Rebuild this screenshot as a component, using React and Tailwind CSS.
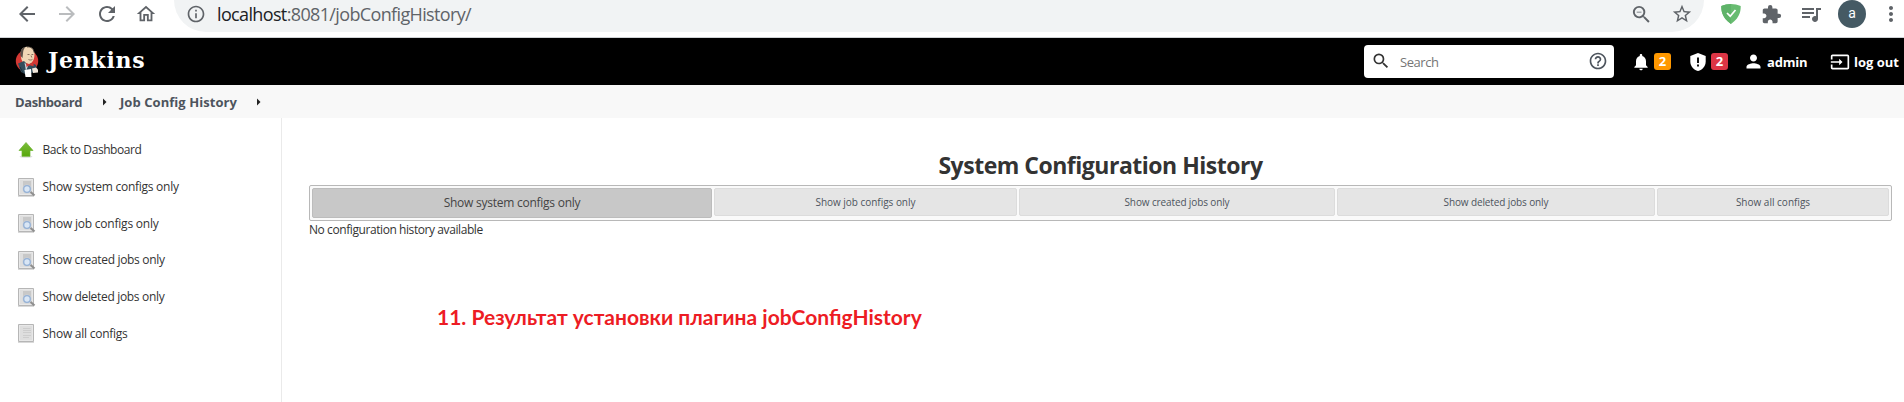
import {
  MdArrowBack,
  MdArrowForward,
  MdRefresh,
  MdOutlineHome,
  MdInfoOutline,
  MdZoomOut,
  MdStarBorder,
  MdExtension,
  MdQueueMusic,
  MdMoreVert,
  MdSearch,
  MdHelpOutline,
  MdNotifications,
  MdPerson,
  MdInput,
} from "react-icons/md";

function JenkinsLogo() {
  return (
    <svg viewBox="0 0 24 32" className="h-8 w-6 shrink-0">
      <ellipse cx="12" cy="15" rx="11.2" ry="11" fill="#d33833" />
      <path d="M6 8C5 3 9 .6 13 .8c5 .2 7 4 6.400 9-.2 4-2 7.400-5.400 8.200L9 17.500C6.500 15 5.600 12 6 8z" fill="#efd6b5" />
      <path d="M5.600 10C4.600 5 7 1.500 10.500 1 8.500 3 8.200 5 8 7.500L7.500 12z" fill="#5b5048" />
      <path d="M12 1c4-.4 6.600 1.600 7 5.500" fill="none" stroke="#3a332e" strokeWidth=".8" />
      <path d="M12.500 8.500h2M16.500 8.500h1.800M13.500 13.500c1.500.8 3 .6 4-.2M16 9.500l.8 2" fill="none" stroke="#6b5344" strokeWidth=".8" />
      <path d="M3 17.500L9 15l4 4 4-2 4 2 1 6-3 1-3 1-6 1-4-2z" fill="#334d5c" />
      <path d="M9.500 16.500L13 20l-2 5z" fill="#cfd8dd" />
      <path d="M11 17l3.500 1.200L18.500 16l.2 4.300-4-1L11.500 21z" fill="#d33833" />
      <path d="M9.500 24l6.500-1 .5 8h-6z" fill="#fff" />
      <path d="M17 22.500l4-1 2 2v3l-5 .5z" fill="#f1e6da" />
      <path d="M5 21l3 6" stroke="#1c2f3a" strokeWidth="1" />
    </svg>
  );
}

function AdShield() {
  return (
    <svg viewBox="0 0 20 20" className="h-5 w-5 shrink-0">
      <path d="M10 0C7 0 3 .7.300 2 .300 5 0 13 10 20 20 13 19.700 5 19.700 2 17 .7 13 0 10 0z" fill="#68bc71" />
      <path d="M10 0C7 0 3 .7.300 2 .300 5 0 13 10 20z" fill="#5fb369" />
      <path d="M6 9l3.200 3.200L14.500 6" fill="none" stroke="#fff" strokeWidth="1.700" />
    </svg>
  );
}

function AlertShield() {
  return (
    <svg viewBox="0 0 16 18" className="h-[18px] w-4 shrink-0">
      <path d="M8 0L.300 3v5.500C.300 13 3.500 17 8 18c4.500-1 7.700-5 7.700-9.500V3z" fill="#fff" />
      <path d="M7 4.500h2v5.500H7zM7 11.500h2v2H7z" fill="#111" />
    </svg>
  );
}

function UpArrow() {
  return (
    <svg viewBox="0 0 16 16" className="h-4 w-4">
      <defs>
        <linearGradient id="up" x1="0" y1="0" x2="0" y2="1">
          <stop offset="0" stopColor="#7cbd3c" />
          <stop offset="1" stopColor="#58a80c" />
        </linearGradient>
      </defs>
      <ellipse cx="8" cy="14.600" rx="6.500" ry="1.200" fill="#ddd" />
      <path d="M8 .5L15 8.500h-3V14.300H4V8.500H1z" fill="url(#up)" stroke="#6bb52e" strokeWidth=".7" />
    </svg>
  );
}

function Sheet({ magnifier }) {
  return (
    <svg viewBox="0 0 18 19" className="h-[19px] w-[18px]">
      <path d="M0 17.800h16v1H0z" fill="#d0d0d0" />
      <path d="M.500.500h15v17H.500z" fill="#dedede" stroke="#b6b6b6" />
      <path d="M1.500 1.500h13v15h-13z" fill="none" stroke="#e8e8e8" />
      {magnifier ? (
        <>
          <path d="M5 3h8v8H5z" fill="#c8c8c8" />
          <path d="M12 13.500l4.500 4" stroke="#8f8f8f" strokeWidth="2.200" />
          <circle cx="9" cy="11" r="4.600" fill="#cfd3d8" />
          <circle cx="9" cy="11" r="3.300" fill="#d9e6f5" stroke="#94b1d6" strokeWidth="1.300" />
        </>
      ) : (
        <path d="M5 4.500h7.500M5 6.500h8M5 8.500h8M5 11.500h8M5 13.500h6" stroke="#cdcdcd" />
      )}
    </svg>
  );
}

function Caret({ className }) {
  return (
    <svg viewBox="0 0 4 8" className={`h-2 w-1 shrink-0 ${className}`}>
      <path d="M0 .5L3.500 4 0 7.500z" fill="#222" />
    </svg>
  );
}

const tasks = [
  { label: "Back to Dashboard", icon: "up", track: "tracking-[-0.42px]" },
  { label: "Show system configs only", icon: "search", track: "tracking-[-0.27px]" },
  { label: "Show job configs only", icon: "search", track: "tracking-[-0.22px]" },
  { label: "Show created jobs only", icon: "search", track: "tracking-[-0.32px]" },
  { label: "Show deleted jobs only", icon: "search", track: "tracking-[-0.32px]" },
  { label: "Show all configs", icon: "list", track: "tracking-[-0.25px]" },
];

const tabs = [
  { label: "Show job configs only", size: "w-[303px]", track: "tracking-[-0.03px]" },
  { label: "Show created jobs only", size: "w-[316px]", track: "tracking-[-0.12px]" },
  { label: "Show deleted jobs only", size: "w-[318px]", track: "tracking-[-0.12px]" },
  { label: "Show all configs", size: "w-[232px]", track: "tracking-normal" },
];

function BrowserBar() {
  return (
    <div className="flex h-[38px] items-start border-b border-[#d0d3d6] bg-white text-[#5f6368]">
      <div className="flex h-7 w-[174px] shrink-0 items-center pl-[15px]">
        <MdArrowBack className="size-6" />
        <MdArrowForward className="ml-4 size-6 text-[#babcbe]" />
        <MdRefresh className="ml-4 size-6" />
        <MdOutlineHome className="ml-4 size-[22px]" />
      </div>
      <div className="flex h-8 w-[1530px] shrink-0 items-center rounded-br-full rounded-bl-full rounded-tr-2xl rounded-tl-2xl bg-[#f1f3f4] pb-1">
        <MdInfoOutline className="ml-3 size-5 shrink-0" />
        <span className="ml-[11px] whitespace-nowrap text-[18px] tracking-[-0.64px]">
          <span className="text-[#202124]">localhost</span>:8081/jobConfigHistory/
        </span>
        <MdZoomOut className="ml-auto size-[23px]" />
        <MdStarBorder className="mr-[11px] ml-[18px] size-[22px]" />
      </div>
      <div className="flex h-7 flex-1 items-center">
        <div className="ml-[17px] flex">
          <AdShield />
        </div>
        <MdExtension className="ml-5 size-[21px] shrink-0" />
        <MdQueueMusic className="ml-[17px] size-6 shrink-0" />
        <span className="ml-[15px] flex size-7 shrink-0 items-center justify-center rounded-full bg-[#455a64] pb-px font-['Roboto'] text-[14px] text-white">
          a
        </span>
        <MdMoreVert className="ml-[13px] size-6 shrink-0" />
      </div>
    </div>
  );
}

function Header() {
  return (
    <header className="flex h-[47px] items-center bg-black text-white">
      <div className="ml-[15px] flex items-center">
        <JenkinsLogo />
        <span className="ml-[9px] pb-[3px] font-['DejaVu_Serif'] text-[22px] font-bold leading-7 tracking-[0.7px]">
          Jenkins
        </span>
      </div>
      <div className="ml-auto flex h-[33px] w-[250px] shrink-0 items-center rounded bg-white">
        <MdSearch className="mb-px ml-[7px] size-5 text-[#333]" />
        <span className="ml-[9px] pt-0.5 text-[13px] tracking-[-0.44px] text-[#757575]">Search</span>
        <MdHelpOutline className="mb-px mr-[6px] ml-auto size-5 text-[#4d545d]" />
      </div>
      <div className="flex w-[290px] shrink-0 items-center text-[13px] font-bold">
        <MdNotifications className="ml-[17px] size-5" />
        <span className="ml-[3px] flex h-[17px] w-[17px] items-center justify-center rounded-[3px] bg-[#ff9800]">2</span>
        <div className="ml-[19px] flex">
          <AlertShield />
        </div>
        <span className="ml-[5px] flex h-[17px] w-[17px] items-center justify-center rounded-[3px] bg-[#dc3545]">2</span>
        <MdPerson className="ml-[15px] size-[21px]" />
        <span className="ml-[3px] w-10 whitespace-nowrap pt-[3px] tracking-[-0.2px]">admin</span>
        <MdInput className="ml-[23px] size-5" />
        <span className="ml-1 whitespace-nowrap pt-[3px]">log out</span>
      </div>
    </header>
  );
}

export default function App() {
  return (
    <div className="h-[402px] w-[1904px] overflow-hidden bg-white font-['Open_Sans',sans-serif] text-[#333]">
      <BrowserBar />
      <Header />
      <nav className="flex h-[33px] items-center bg-[#f8f8f8] pt-0.5 pl-[15px] text-[13px] font-bold text-[#4d545d]">
        <span className="w-[67px] tracking-[-0.42px]">Dashboard</span>
        <Caret className="mb-0.5 ml-[21px]" />
        <span className="ml-[13px] w-[117px] whitespace-nowrap tracking-[0.06px]">Job Config History</span>
        <Caret className="mb-0.5 ml-5" />
      </nav>
      <div className="flex h-[284px]">
        <aside className="w-[282px] shrink-0 border-r border-[#eaeaea] pt-[13px]">
          {tasks.map((t) => (
            <div key={t.label} className="flex h-[36.7px] items-center pl-[18px]">
              <span className="w-[24.5px] pt-0.5">
                {t.icon === "up" ? <UpArrow /> : <Sheet magnifier={t.icon === "search"} />}
              </span>
              <span className={`pt-0.5 text-[12px] ${t.track}`}>{t.label}</span>
            </div>
          ))}
        </aside>
        <main className="flex-1 pt-[30px] pr-3 pl-[27px]">
          <h1 className="text-center text-[23px] font-bold leading-[34px] tracking-[-0.49px]">
            System Configuration History
          </h1>
          <div className="mt-[3px] flex h-9 items-start gap-0.5 rounded-[2px] border border-[#b8b8b8] bg-[#fafafa] p-0.5 text-[#4d545d]">
            <div className="flex h-[30px] w-[400px] shrink-0 items-center justify-center rounded-[2px] border border-[#bcbcbc] bg-[#c8c8c8] text-[12px] tracking-[-0.25px] text-[#444]">
              Show system configs only
            </div>
            {tabs.map((t) => (
              <div
                key={t.label}
                className={`flex h-7 items-center justify-center rounded-[2px] border border-[#dcdcdc] bg-[#e5e5e5] text-[10px] ${t.size} ${t.track}`}
              >
                {t.label}
              </div>
            ))}
          </div>
          <p className="text-[12px] leading-[18px] tracking-[-0.42px]">No configuration history available</p>
          <p className="mt-[62px] ml-[128px] font-['Lato'] text-[21px] leading-8 font-bold text-[#ed1c24]">
            11. Результат установки плагина jobConfigHistory
          </p>
        </main>
      </div>
    </div>
  );
}
